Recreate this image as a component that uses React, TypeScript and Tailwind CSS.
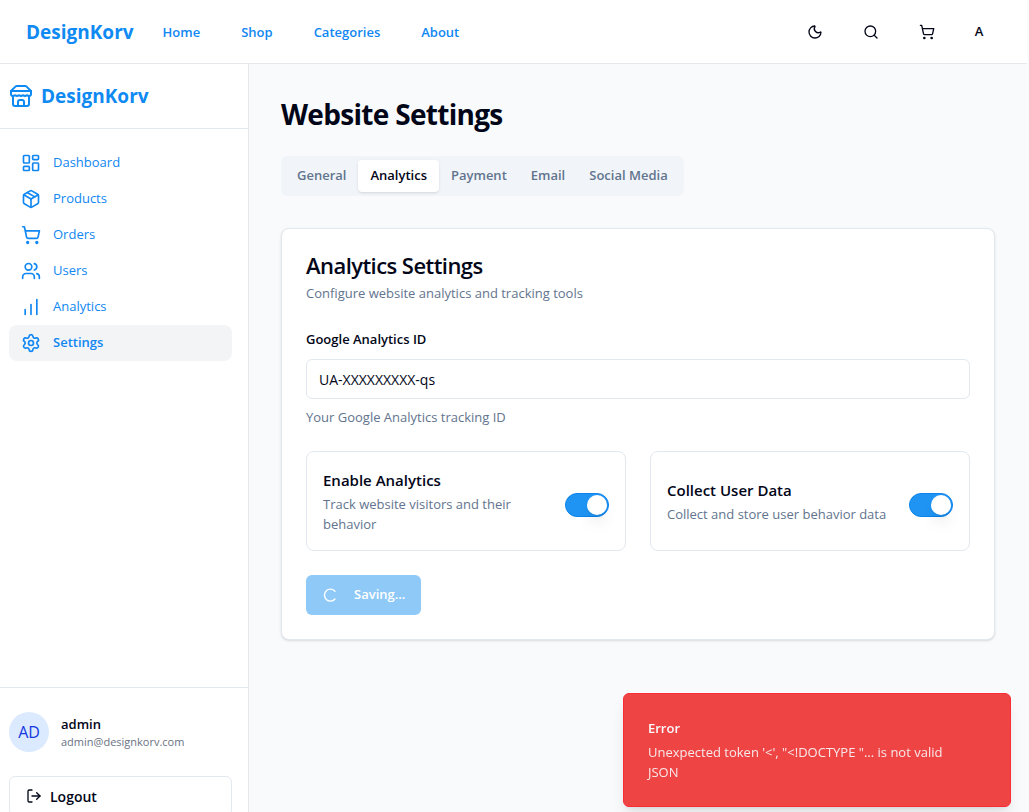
import { useState } from "react";
import {
  ChartNoAxesColumnIncreasing,
  LayoutDashboard,
  LogOut,
  Moon,
  Package,
  Search,
  Settings,
  ShoppingCart,
  Users,
} from "lucide-react";

const topLinks = ["Home", "Shop", "Categories", "About"];

const sideLinks = [
  { label: "Dashboard", icon: LayoutDashboard },
  { label: "Products", icon: Package },
  { label: "Orders", icon: ShoppingCart },
  { label: "Users", icon: Users },
  { label: "Analytics", icon: ChartNoAxesColumnIncreasing },
  { label: "Settings", icon: Settings },
];

const tabs = ["General", "Analytics", "Payment", "Email", "Social Media"];

function StoreIcon() {
  return (
    <svg
      className="size-6 shrink-0"
      viewBox="0 0 24 24"
      fill="none"
      stroke="currentColor"
      strokeWidth="2"
      strokeLinecap="round"
      strokeLinejoin="round"
      aria-hidden="true"
    >
      <path d="m2 7 4.41-4.41A2 2 0 0 1 7.83 2h8.34a2 2 0 0 1 1.42.59L22 7" />
      <path d="M4 12v8a2 2 0 0 0 2 2h12a2 2 0 0 0 2-2v-8" />
      <path d="M15 22v-4a2 2 0 0 0-2-2h-2a2 2 0 0 0-2 2v4" />
      <path d="M2 7h20" />
      <path d="M22 7v3a2 2 0 0 1-2 2a2.7 2.7 0 0 1-1.59-.63.7.7 0 0 0-.82 0A2.7 2.7 0 0 1 16 12a2.7 2.7 0 0 1-1.59-.63.7.7 0 0 0-.82 0A2.7 2.7 0 0 1 12 12a2.7 2.7 0 0 1-1.59-.63.7.7 0 0 0-.82 0A2.7 2.7 0 0 1 8 12a2.7 2.7 0 0 1-1.59-.63.7.7 0 0 0-.82 0A2.7 2.7 0 0 1 4 12a2 2 0 0 1-2-2V7" />
    </svg>
  );
}

function ToggleCard({ id, title, text }: { id: string; title: string; text: string }) {
  const [on, setOn] = useState(true);
  return (
    <div className="flex items-center justify-between gap-3 rounded-lg border border-slate-200 p-4">
      <div className="flex flex-col gap-0.5">
        <label htmlFor={id} className="text-[15px] leading-6 font-semibold">
          {title}
        </label>
        <p className="text-[13px] leading-5 text-slate-500">{text}</p>
      </div>
      <div className="flex shrink-0 pt-2">
        <input
          id={id}
          type="checkbox"
          role="switch"
          checked={on}
          onChange={(e) => setOn(e.target.checked)}
          className="h-6 w-11 cursor-pointer appearance-none rounded-full border border-slate-200 bg-slate-200 p-px before:block before:size-5 before:rounded-full before:bg-white before:shadow-lg checked:border-[#0c84ec] checked:bg-[#2094f3] checked:before:ml-5"
        />
      </div>
    </div>
  );
}

export default function App() {
  const [tab, setTab] = useState("Analytics");
  const [trackingId, setTrackingId] = useState("UA-XXXXXXXXX-qs");

  return (
    <div className="flex h-screen flex-col overflow-hidden bg-gray-50 pr-0.5 font-['Open_Sans','Noto_Sans',sans-serif] text-slate-950">
      <header className="flex h-16 shrink-0 items-center justify-between border-b border-gray-200 bg-white pr-8 pl-[26px]">
        <div className="flex items-center gap-[29px]">
          <a href="#home" className="text-[19px] leading-7 font-bold text-[#0f8af3]">
            DesignKorv
          </a>
          <nav className="flex items-center gap-[41px] text-[13px] leading-5 font-semibold text-[#1087f2]">
            {topLinks.map((label) => (
              <a key={label} href={`#${label}`}>
                {label}
              </a>
            ))}
          </nav>
        </div>
        <div className="flex items-center gap-4">
          <button type="button" aria-label="Toggle theme" className="flex size-10 items-center justify-center">
            <Moon className="size-4" />
          </button>
          <button type="button" aria-label="Search" className="flex size-10 items-center justify-center">
            <Search className="size-4" />
          </button>
          <button type="button" aria-label="Cart" className="flex size-10 items-center justify-center">
            <ShoppingCart className="size-4" />
          </button>
          <button type="button" className="flex size-8 items-center justify-center text-[13px] font-semibold">
            A
          </button>
        </div>
      </header>

      <div className="flex min-h-0 flex-1 items-start">
        <aside className="flex h-[calc(100vh-36px)] w-[249px] shrink-0 flex-col border-r border-gray-200 bg-white">
          <div className="flex h-[65px] shrink-0 items-center gap-2 border-b border-slate-200 pl-[9px] text-[#0f8af3]">
            <StoreIcon />
            <span className="text-[19px] leading-7 font-bold">DesignKorv</span>
          </div>
          <nav className="flex flex-1 flex-col py-4 pr-4 pl-[9px]">
            {sideLinks.map(({ label, icon: Icon }) => (
              <a
                key={label}
                href={`#${label}`}
                aria-current={label === "Settings" ? "page" : undefined}
                className="flex h-9 items-center gap-3 rounded-lg px-3 text-[13px] text-[#1087f2] aria-[current=page]:bg-gray-100 aria-[current=page]:font-semibold"
              >
                <Icon className="size-5" />
                {label}
              </a>
            ))}
          </nav>
          <div className="flex flex-col gap-6 border-t border-slate-200 pt-6 pr-4 pb-6 pl-[9px]">
            <div className="flex items-center gap-3">
              <div className="flex size-10 items-center justify-center rounded-full bg-blue-100 text-base text-[#1238e0]">
                AD
              </div>
              <div className="flex flex-col">
                <span className="text-[13px] leading-5 font-semibold">admin</span>
                <span className="text-[11px] leading-4 text-gray-500">admin@designkorv.com</span>
              </div>
            </div>
            <button
              type="button"
              className="flex h-10 items-center gap-2 rounded-md border border-slate-200 px-4 text-[14px] font-semibold"
            >
              <LogOut className="size-4" />
              Logout
            </button>
          </div>
        </aside>

        <main className="flex min-w-0 flex-1 flex-col items-start gap-8 p-8">
          <div className="flex flex-col items-start gap-6">
            <h1 className="text-[28px] leading-9 font-bold tracking-tight">Website Settings</h1>
            <div role="tablist" className="flex h-10 items-center rounded-md bg-slate-100 p-1">
              {tabs.map((name) => (
                <button
                  key={name}
                  type="button"
                  role="tab"
                  aria-selected={tab === name}
                  onClick={() => setTab(name)}
                  className="h-8 rounded-sm px-3 text-[13px] font-semibold text-slate-500 aria-selected:bg-white aria-selected:text-slate-950 aria-selected:shadow-sm"
                >
                  {name}
                </button>
              ))}
            </div>
          </div>

          <section className="flex w-full flex-col gap-6 rounded-lg border border-slate-200 bg-white p-6 shadow-sm">
            <div className="flex flex-col gap-1.5">
              <h2 className="text-[22px] leading-6 font-semibold tracking-tight">Analytics Settings</h2>
              <p className="text-[13px] leading-5 text-slate-500">Configure website analytics and tracking tools</p>
            </div>
            <div className="flex flex-col gap-2">
              <label htmlFor="ga-id" className="text-[13px] leading-6 font-semibold">
                Google Analytics ID
              </label>
              <input
                id="ga-id"
                type="text"
                value={trackingId}
                onChange={(e) => setTrackingId(e.target.value)}
                className="h-10 w-full rounded-md border border-slate-200 bg-white px-3 text-[14px]"
              />
              <p className="text-[13px] leading-5 text-slate-500">Your Google Analytics tracking ID</p>
            </div>
            <div className="grid grid-cols-2 gap-6">
              <ToggleCard id="enable" title="Enable Analytics" text="Track website visitors and their behavior" />
              <ToggleCard id="collect" title="Collect User Data" text="Collect and store user behavior data" />
            </div>
            <button
              type="button"
              disabled
              className="flex h-10 items-center gap-4 self-start rounded-md bg-[#2094f3] px-4 text-[13px] font-semibold text-white opacity-50"
            >
              <svg
                className="size-4"
                viewBox="0 0 16 16"
                fill="none"
                stroke="currentColor"
                strokeWidth="1.4"
                strokeLinecap="round"
                aria-hidden="true"
              >
                <path d="M13 4.2A6 6 0 1 0 13 12" />
              </svg>
              Saving...
            </button>
          </section>
        </main>
      </div>

      <div
        role="alert"
        className="fixed right-[18px] bottom-[5px] flex w-[388px] flex-col gap-1 rounded-md border border-red-500 bg-[#ef4444] p-6 text-[13px] leading-5 text-slate-50 shadow-lg"
      >
        <p className="font-semibold">Error</p>
        <p className="pr-6 opacity-90">Unexpected token '&lt;', "&lt;!DOCTYPE "... is not valid JSON</p>
      </div>
    </div>
  );
}
